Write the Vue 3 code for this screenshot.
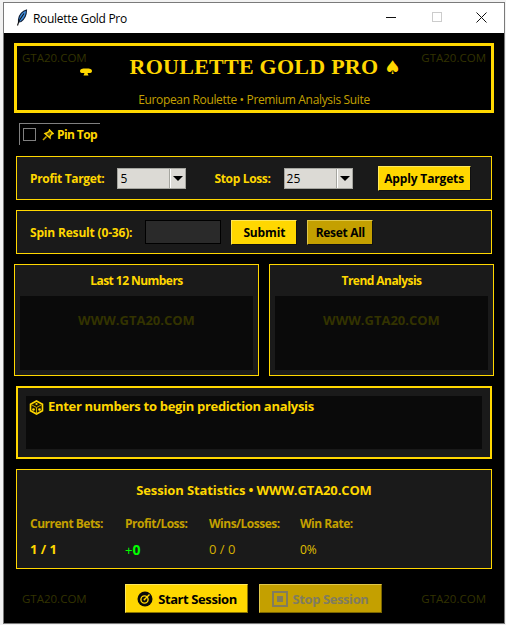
<template>
  <div class="window">
    <div class="titlebar">
      <svg class="feather" width="12" height="18" viewBox="0 0 12 18">
        <path d="M10.5 1C6.5 2 3 6 2.5 10.5L2.5 13L5 12.5C8.5 10 10.5 6 10.5 1Z" fill="#3f8fe0" stroke="#10203a" stroke-width="1.1" />
        <path d="M8 4.5L3 12L1.5 16.5" fill="none" stroke="#111" stroke-width="1.1" />
      </svg>
      <span class="win-title">Roulette Gold Pro</span>
      <div class="win-controls">
        <span class="ctl"><i class="ctl-min"></i></span>
        <span class="ctl"><i class="ctl-max"></i></span>
        <span class="ctl">
          <svg width="11" height="11" viewBox="0 0 11 11"><path d="M.5.5l10 10M10.5.5l-10 10" stroke="#111" fill="none" /></svg>
        </span>
      </div>
    </div>

    <div class="content">
      <header class="banner">
        <span class="mark mark-left">GTA20.COM</span>
        <span class="mark mark-right">GTA20.COM</span>
        <svg class="clipped-spade" width="14" height="8" viewBox="0 0 14 8">
          <path d="M1 3C1 1 3 .5 7 .5S13 1 13 3C13 5 11 5.2 8.5 5L9.5 7.5H4.5L5.5 5C3 5.2 1 5 1 3Z" fill="#ffd700" />
        </svg>
        <h1>ROULETTE GOLD PRO <span class="spade">♠</span></h1>
        <p>European Roulette • Premium Analysis Suite</p>
      </header>

      <div class="pin-row">
        <label class="pin">
          <span class="box"></span>
          <svg class="pin-icon" width="12" height="12" viewBox="0 0 12 12">
            <path d="M7.5 1L11 4.5L9.5 5L8 7.5L8 9L3 4.5L4.5 4L7 2.5Z" fill="#5a4a00" stroke="#ffd700" stroke-width="1.4" />
            <path d="M4.5 7.5L1 11" stroke="#c9a800" stroke-width="1.6" />
          </svg>
          Pin Top
        </label>
      </div>

      <section class="panel target-row">
        <span class="label">Profit Target:</span>
        <div class="select select-one"><span>5</span><b></b></div>
        <span class="label stop-label">Stop Loss:</span>
        <div class="select select-two"><span>25</span><b></b></div>
        <button class="btn apply">Apply Targets</button>
      </section>

      <section class="panel spin-row">
        <span class="label spin-label">Spin Result (0-36):</span>
        <div class="spin-input"></div>
        <button class="btn submit">Submit</button>
        <button class="btn reset">Reset All</button>
      </section>

      <div class="columns">
        <section v-for="c in columns" :key="c" class="col">
          <h2>{{ c }}</h2>
          <div class="col-body">WWW.GTA20.COM</div>
        </section>
      </div>

      <section class="prediction">
        <div class="prediction-body">
          <svg class="dice" width="15" height="15" viewBox="0 0 15 15">
            <path d="M7.5 1L13.5 4.2V10.8L7.5 14L1.5 10.8V4.2Z" fill="#1a1500" stroke="#ffd700" stroke-width="1.6" />
            <path d="M2 4.5L7.5 7.5L13 4.5M7.5 7.5V13.5" fill="none" stroke="#c9a800" />
            <circle cx="7.5" cy="4" r="1.1" fill="#ffd700" />
            <circle cx="4.5" cy="9.5" r="1.3" fill="#ffd700" />
            <circle cx="10.5" cy="9.5" r="1.3" fill="#ffd700" />
          </svg>
          <span>Enter numbers to begin prediction analysis</span>
        </div>
      </section>

      <section class="stats">
        <h2>Session Statistics • WWW.GTA20.COM</h2>
        <div class="stat-grid">
          <span class="stat-label">Current Bets:</span>
          <span class="stat-label">Profit/Loss:</span>
          <span class="stat-label">Wins/Losses:</span>
          <span class="stat-label">Win Rate:</span>
          <span class="stat-bets">1 / 1</span>
          <span class="stat-profit">+<b>0</b></span>
          <span class="stat-plain">0 / 0</span>
          <span class="stat-rate">0%</span>
        </div>
      </section>

      <footer class="actions">
        <span class="mark-foot">GTA20.COM</span>
        <div class="action-btns">
          <button class="btn big start">
            <svg width="16" height="16" viewBox="0 0 16 16">
              <circle cx="8" cy="8" r="7.5" fill="#0a0a0a" />
              <circle cx="7.5" cy="8.5" r="3.6" fill="none" stroke="#ffd700" stroke-width="1.4" />
              <circle cx="7.5" cy="8.5" r="1" fill="#ffd700" />
              <path d="M8 8L12.5 3.5" stroke="#ffd700" stroke-width="1.4" />
            </svg>
            Start Session
          </button>
          <button class="btn big stop">
            <svg width="16" height="16" viewBox="0 0 16 16">
              <rect x="1" y="1" width="14" height="14" fill="none" stroke="#807c60" stroke-width="2" />
              <rect x="5" y="5" width="6" height="6" fill="#807c60" />
            </svg>
            Stop Session
          </button>
        </div>
        <span class="mark-foot">GTA20.COM</span>
      </footer>
    </div>
  </div>
</template>

<script setup>
const columns = ['Last 12 Numbers', 'Trend Analysis']
</script>

<style>
html,
body {
  margin: 0;
  background: #f2f2f2;
}
</style>

<style scoped>
.window {
  box-sizing: border-box;
  width: 502px;
  height: 622px;
  margin: 2px 0 0 3px;
  border: 1px solid #7a7a7a;
  background: #000;
  font-family: "Open Sans", "Noto Sans", sans-serif;
  overflow: hidden;
}

.titlebar {
  display: flex;
  align-items: center;
  height: 30px;
  background: #fff;
  color: #000;
  font-size: 12px;
}

.feather {
  margin-left: 12px;
  margin-right: 5px;
}

.win-title {
  letter-spacing: -0.3px;
}

.win-controls {
  display: flex;
  margin-left: auto;
}

.ctl {
  display: flex;
  align-items: center;
  justify-content: center;
  width: 45px;
  height: 28px;
  padding-bottom: 2px;
}

.ctl-min {
  width: 10px;
  height: 1px;
  margin-right: 2px;
  background: #111;
}

.ctl-max {
  box-sizing: border-box;
  width: 10px;
  height: 10px;
  border: 1px solid #ccc;
}

.content {
  padding: 10px;
}

.banner {
  position: relative;
  box-sizing: border-box;
  height: 70px;
  border: 3px solid #ffd700;
  text-align: center;
}

.banner h1 {
  margin: 6px 0 0;
  padding-left: 23px;
  font-family: "Liberation Serif", serif;
  font-size: 22px;
  font-weight: 700;
  line-height: 30px;
  letter-spacing: 0.25px;
  color: #ffd700;
}

.spade {
  font-family: "DejaVu Sans", sans-serif;
  font-size: 19px;
}

.banner p {
  margin: 10px 0 0;
  font-size: 12px;
  line-height: 16px;
  letter-spacing: -0.34px;
  color: #c4a000;
}

.mark {
  position: absolute;
  top: 4px;
  font-size: 11.5px;
  line-height: 16px;
  color: #333300;
}

.mark-left {
  left: 5px;
}

.mark-right {
  right: 5px;
}

.clipped-spade {
  position: absolute;
  left: 62px;
  top: 22px;
}

.pin-row {
  display: flex;
  height: 22px;
  margin-top: 10px;
  margin-left: 5px;
}

.pin {
  display: flex;
  align-items: center;
  width: 81px;
  border-top: 1px solid #808080;
  border-left: 1px solid #808080;
  box-sizing: border-box;
  font-size: 12px;
  font-weight: 700;
  letter-spacing: -0.6px;
  color: #ffd700;
  white-space: nowrap;
}

.box {
  box-sizing: border-box;
  width: 13px;
  height: 13px;
  margin-left: 3px;
  border: 1px solid #808080;
}

.pin-icon {
  margin: 0 3px 0 6px;
}

.panel {
  display: flex;
  align-items: center;
  box-sizing: border-box;
  height: 44px;
  margin: 11px 2px 0;
  padding-left: 13px;
  border: 1px solid #ffd700;
  background: #1a1a1a;
}

.spin-row {
  margin-top: 10px;
}

.label {
  font-size: 12px;
  font-weight: 700;
  letter-spacing: -0.34px;
  color: #ffd700;
  white-space: nowrap;
}

.spin-label {
  letter-spacing: -0.18px;
}

.select {
  display: flex;
  box-sizing: border-box;
  width: 69px;
  height: 21px;
  margin-left: 13px;
  border: 1px solid #a5a59f;
  background: #dcdad5;
  color: #000;
  font-size: 12px;
  line-height: 19px;
}

.select span {
  flex: 1;
  padding-left: 2px;
}

.select b {
  position: relative;
  width: 14px;
  border-left: 1px solid #fff;
  background: #dcdad5;
  box-shadow: -1px 0 0 #a5a59f;
}

.select b::after {
  content: "";
  position: absolute;
  left: 2px;
  top: 7px;
  border-left: 5px solid transparent;
  border-right: 5px solid transparent;
  border-top: 5px solid #000;
}

.stop-label {
  margin-left: 28px;
}

.btn {
  box-sizing: border-box;
  padding: 0;
  border: 1px solid;
  border-color: #ffe85a #111 #111 #ffe85a;
  background: #ffd700;
  color: #000;
  font-family: inherit;
  font-size: 12px;
  font-weight: 700;
  letter-spacing: -0.15px;
  white-space: nowrap;
}

.apply {
  width: 93px;
  height: 25px;
  margin-left: 25px;
}

.spin-input {
  box-sizing: border-box;
  width: 76px;
  height: 24px;
  margin-left: 13px;
  border: 1px solid #000;
  background: #2a2a2a;
}

.submit {
  width: 66px;
  height: 25px;
  margin-left: 10px;
}

.reset {
  width: 66px;
  height: 25px;
  margin-left: 10px;
  border-color: #e0c84a #111 #111 #e0c84a;
  background: #c4a000;
  letter-spacing: -0.3px;
}

.columns {
  display: grid;
  grid-template-columns: 245px 225px;
  gap: 10px;
  margin-top: 10px;
}

.col {
  box-sizing: border-box;
  height: 112px;
  padding: 0 5px 5px;
  border: 1px solid #ffd700;
  background: #1a1a1a;
}

.col h2 {
  margin: 0;
  height: 31px;
  font-size: 12px;
  font-weight: 700;
  line-height: 31px;
  letter-spacing: -0.55px;
  text-align: center;
  color: #ffd700;
}

.col-body {
  box-sizing: border-box;
  height: 74px;
  padding-top: 15px;
  background: #0a0a0a;
  font-size: 13px;
  font-weight: 700;
  line-height: 18px;
  text-align: center;
  color: #333300;
}

.prediction {
  box-sizing: border-box;
  height: 73px;
  margin: 10px 2px 0;
  padding: 8px;
  border: 2px solid #ffd700;
  background: #1a1a1a;
}

.prediction-body {
  display: flex;
  height: 53px;
  padding: 2px 0 0 3px;
  box-sizing: border-box;
  background: #0a0a0a;
  font-size: 13px;
  font-weight: 700;
  line-height: 16px;
  letter-spacing: -0.31px;
  color: #ffd700;
}

.dice {
  margin: 2px 4px 0 0;
}

.stats {
  box-sizing: border-box;
  height: 100px;
  margin: 10px 2px 0;
  padding: 0 13px;
  border: 1px solid #ffd700;
  background: #1a1a1a;
}

.stats h2 {
  margin: 11px 0 0;
  font-size: 13px;
  font-weight: 700;
  line-height: 18px;
  letter-spacing: -0.12px;
  text-align: center;
  color: #ffd700;
}

.stat-grid {
  display: grid;
  grid-template-columns: 95px 84px 91px 1fr;
  grid-auto-rows: 26px;
  align-items: center;
  margin-top: 11px;
  white-space: nowrap;
}

.stat-label {
  font-size: 12px;
  font-weight: 700;
  letter-spacing: -0.5px;
  color: #c4a000;
}

.stat-bets {
  font-size: 13px;
  font-weight: 700;
  color: #ffd700;
}

.stat-profit {
  font-size: 13px;
  color: #00ff00;
}

.stat-profit b {
  font-size: 14px;
}

.stat-plain {
  font-size: 13px;
  color: #d4b000;
}

.stat-rate {
  font-size: 12px;
  color: #e0c000;
}

.actions {
  display: flex;
  align-items: center;
  justify-content: space-between;
  margin-top: 15px;
  padding: 0 8px;
}

.mark-foot {
  font-size: 11.5px;
  color: #333300;
}

.action-btns {
  display: flex;
  gap: 11px;
  margin-right: 2px;
}

.big {
  display: flex;
  align-items: center;
  justify-content: center;
  gap: 5px;
  width: 123px;
  height: 29px;
  font-size: 13px;
  letter-spacing: -0.4px;
}

.start {
  padding-left: 2px;
  border-color: #ffe85a #8a7400 #8a7400 #ffe85a;
}

.stop {
  border-color: #e0c84a #7a6500 #7a6500 #e0c84a;
  background: #c4a000;
  color: #807c60;
}
</style>
